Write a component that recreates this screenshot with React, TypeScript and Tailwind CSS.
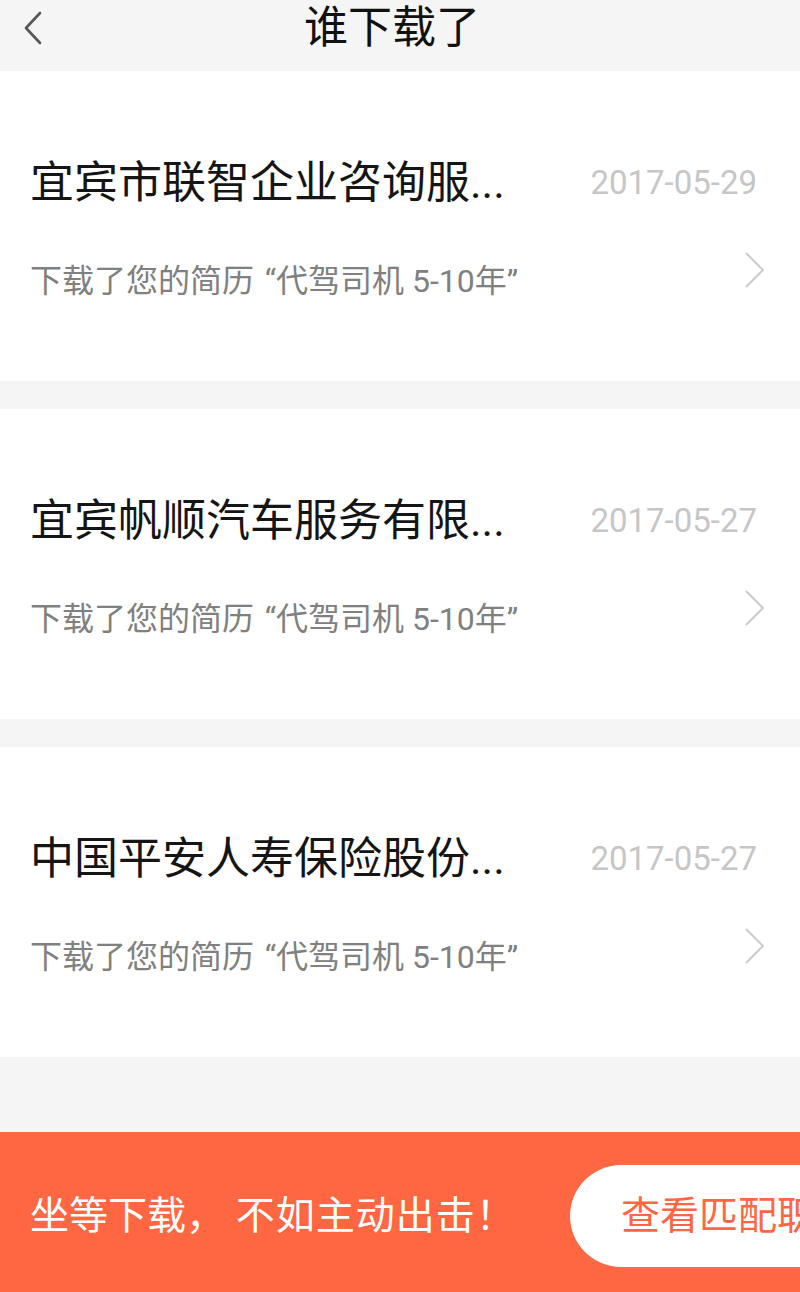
import React from "react";

const items = [
  { company: "宜宾市联智企业咨询服...", date: "2017-05-29" },
  { company: "宜宾帆顺汽车服务有限...", date: "2017-05-27" },
  { company: "中国平安人寿保险股份...", date: "2017-05-27" },
];

const font = { fontFamily: '"Roboto", "Noto Sans CJK SC", sans-serif' };

function BackIcon() {
  return (
    <svg width="20" height="34" viewBox="0 0 20 34" fill="none">
      <path d="M18 2 L4 17 L18 32" stroke="#555" strokeWidth="2.6" strokeLinecap="round" strokeLinejoin="round" />
    </svg>
  );
}

function ChevronRight() {
  return (
    <svg width="20" height="36" viewBox="0 0 20 36" fill="none">
      <path d="M1 1 L18 18 L1 35" stroke="#c8c8c8" strokeWidth="1.8" />
    </svg>
  );
}

function DownloadItem({ company, date }: { company: string; date: string }) {
  return (
    <div className="flex h-[310px] flex-col bg-white pl-[30px] pt-[90px]">
      <div className="flex items-center justify-between pr-[43px]">
        <span className="whitespace-nowrap text-[44px] leading-[44px] text-[#151515]">{company}</span>
        <span className="text-[33px] leading-[44px] text-[#c6c6c6]">{date}</span>
      </div>
      <div className="mt-[59px] flex items-center justify-between pr-[35px]">
        <span className="whitespace-nowrap text-[32px] leading-[34px] text-[#808080]">
          下载了您的简历<span className="inline-block w-[22px] text-right">“</span>代驾司机 5-10年<span className="inline-block w-[16px]">”</span>
        </span>
        <span className="-mt-[22px]">
          <ChevronRight />
        </span>
      </div>
    </div>
  );
}

export default function App() {
  return (
    <div className="flex h-[1292px] w-[800px] flex-col overflow-hidden bg-[#f5f5f5]" style={font}>
      <header className="flex h-[71px] items-center bg-[#f5f5f5] pb-[16px] pl-[22px] pr-[22px]">
        <BackIcon />
        <h1 className="flex-1 pr-[36px] text-center text-[44px] font-normal leading-[48px] text-[#111]">谁下载了</h1>
      </header>

      <div className="flex flex-col gap-[28px]">
        {items.map((item, i) => (
          <DownloadItem key={i} {...item} />
        ))}
      </div>

      <div className="flex-1" />

      <div className="flex h-[160px] items-center justify-between overflow-hidden bg-[#ff6642] pl-[30px] pt-[7px]">
        <span className="whitespace-nowrap text-[39px] leading-[40px] text-white">
          坐等下载，<span className="tracking-[1px]"> 不如主动出击！</span>
        </span>
        <button className="-mr-[60px] flex h-[102px] w-[290px] shrink-0 items-center rounded-l-full bg-white pl-[51px]">
          <span className="whitespace-nowrap text-[39px] leading-[40px] text-[#ff6642]">查看匹配职位</span>
        </button>
      </div>
    </div>
  );
}
